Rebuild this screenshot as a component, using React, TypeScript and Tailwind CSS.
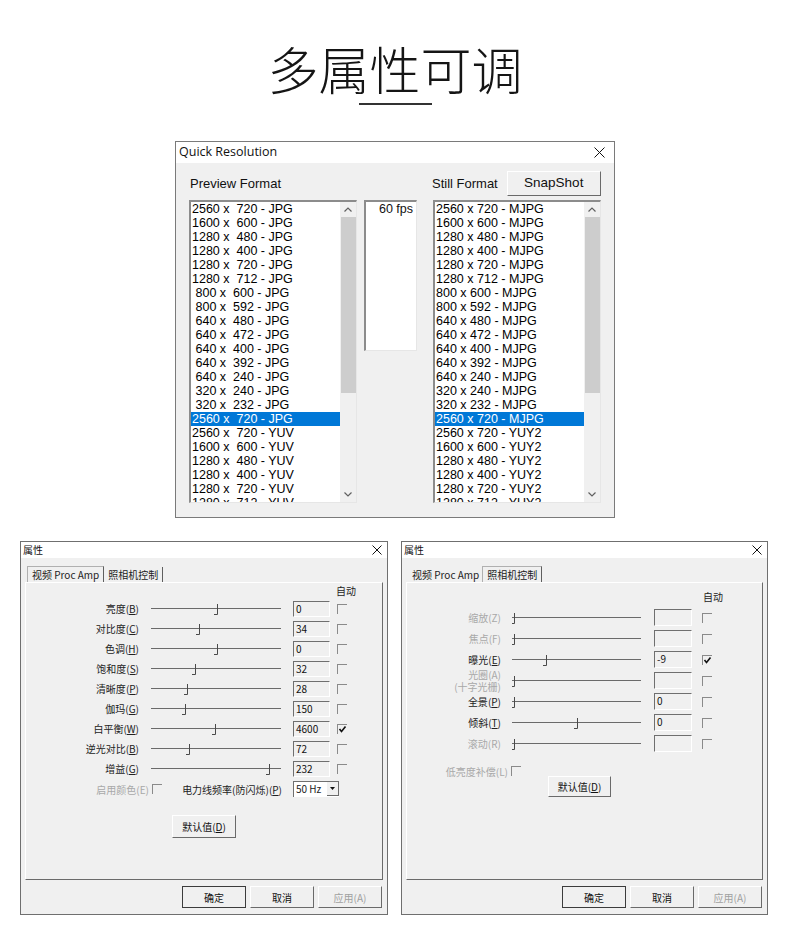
import React from "react";

const CJK = "font-['Noto_Sans_CJK_SC',sans-serif]";
const ARIAL = "font-['Liberation_Sans',Arial,sans-serif]";

const leftItems = [
  "2560 x  720 - JPG",
  "1600 x  600 - JPG",
  "1280 x  480 - JPG",
  "1280 x  400 - JPG",
  "1280 x  720 - JPG",
  "1280 x  712 - JPG",
  " 800 x  600 - JPG",
  " 800 x  592 - JPG",
  " 640 x  480 - JPG",
  " 640 x  472 - JPG",
  " 640 x  400 - JPG",
  " 640 x  392 - JPG",
  " 640 x  240 - JPG",
  " 320 x  240 - JPG",
  " 320 x  232 - JPG",
  "2560 x  720 - JPG",
  "2560 x  720 - YUV",
  "1600 x  600 - YUV",
  "1280 x  480 - YUV",
  "1280 x  400 - YUV",
  "1280 x  720 - YUV",
  "1280 x  712 - YUV",
];

const rightItems = [
  "2560 x 720 - MJPG",
  "1600 x 600 - MJPG",
  "1280 x 480 - MJPG",
  "1280 x 400 - MJPG",
  "1280 x 720 - MJPG",
  "1280 x 712 - MJPG",
  "800 x 600 - MJPG",
  "800 x 592 - MJPG",
  "640 x 480 - MJPG",
  "640 x 472 - MJPG",
  "640 x 400 - MJPG",
  "640 x 392 - MJPG",
  "640 x 240 - MJPG",
  "320 x 240 - MJPG",
  "320 x 232 - MJPG",
  "2560 x 720 - MJPG",
  "2560 x 720 - YUY2",
  "1600 x 600 - YUY2",
  "1280 x 480 - YUY2",
  "1280 x 400 - YUY2",
  "1280 x 720 - YUY2",
  "1280 x 712 - YUY2",
];

function Chevron({ up }: { up?: boolean }) {
  return (
    <svg width="8" height="5" viewBox="0 0 8 5">
      <path
        d={up ? "M0.5 4.5 L4 1 L7.5 4.5" : "M0.5 0.5 L4 4 L7.5 0.5"}
        fill="none"
        stroke="#606060"
        strokeWidth="1.2"
      />
    </svg>
  );
}

function CloseX({ size }: { size: number }) {
  return (
    <svg width={size} height={size} viewBox={`0 0 ${size} ${size}`}>
      <path
        d={`M0.5 0.5 L${size - 0.5} ${size - 0.5} M${size - 0.5} 0.5 L0.5 ${size - 0.5}`}
        stroke="#111"
        strokeWidth="1"
      />
    </svg>
  );
}

function ListBox({ items, selected }: { items: string[]; selected: number }) {
  return (
    <div className="w-[168px] h-[303px] flex border-t-2 border-l-2 border-t-[#8c8c8c] border-l-[#8c8c8c] border-r border-b border-r-[#e6e6e6] border-b-[#e6e6e6] bg-white overflow-hidden">
      <div className="flex-1 overflow-hidden">
        {items.map((t, i) => (
          <div
            key={i}
            className={`h-[14px] leading-[14px] text-[12.5px] pl-[1px] whitespace-pre ${
              i === selected ? "bg-[#0078d7] text-white" : "text-black"
            }`}
          >
            {t}
          </div>
        ))}
      </div>
      <div className="w-[16px] bg-[#f0f0f0] flex flex-col items-center">
        <div className="h-[15px] flex items-center justify-center">
          <Chevron up />
        </div>
        <div className="h-[176px] w-[15px] bg-[#cdcdcd]" />
        <div className="flex-1" />
        <div className="h-[16px] flex items-center justify-center">
          <Chevron />
        </div>
      </div>
    </div>
  );
}

function Slider({ w, pos }: { w: number; pos: number }) {
  return (
    <svg width={w} height={16} className="block shrink-0">
      <line x1={0} y1={7.5} x2={w} y2={7.5} stroke="#6a6a6a" />
      <path d={`M${pos + 0.5} 3 V13.5 H${pos - 3}`} fill="none" stroke="#4a4a4a" />
    </svg>
  );
}

function Check({ on }: { on?: boolean }) {
  return (
    <div className="w-[10px] h-[10px] shrink-0 border-t border-l border-t-[#8a8a8a] border-l-[#8a8a8a]">
      {on && (
        <svg width="9" height="9" viewBox="0 0 9 9" className="block">
          <path d="M1.5 4 L3.5 6.5 L7.5 1.5" fill="none" stroke="#111" strokeWidth="1.6" />
        </svg>
      )}
    </div>
  );
}

function TextBox({ v, w, h }: { v: string; w: string; h: string }) {
  return (
    <div
      className={`${w} ${h} shrink-0 border-t border-l border-t-[#6f6f6f] border-l-[#6f6f6f] border-r border-b border-r-white border-b-white pl-[2px] text-[10px] leading-[14px] text-[#111]`}
    >
      {v}
    </div>
  );
}

function Btn({
  children,
  className,
  def,
  disabled,
}: {
  children: React.ReactNode;
  className: string;
  def?: boolean;
  disabled?: boolean;
}) {
  return (
    <div
      className={`${className} flex items-center justify-center text-[10px] bg-[#f0f0f0] border ${
        def
          ? "border-[#3c3c3c]"
          : "border-t-white border-l-white border-r-[#6a6a6a] border-b-[#6a6a6a]"
      } ${disabled ? "text-[#a0a0a0]" : "text-[#111]"}`}
    >
      {children}
    </div>
  );
}

function Label({ text, u, off }: { text: string; u: string; off?: boolean }) {
  if (off) {
    return (
      <span className="text-[#a8a8a8]">
        {text}({u})
      </span>
    );
  }
  return (
    <span>
      {text}(<u>{u}</u>)
    </span>
  );
}

const ampRows = [
  { t: "亮度", u: "B", v: "0", p: 66 },
  { t: "对比度", u: "C", v: "34", p: 48 },
  { t: "色调", u: "H", v: "0", p: 66 },
  { t: "饱和度", u: "S", v: "32", p: 44 },
  { t: "清晰度", u: "P", v: "28", p: 36 },
  { t: "伽玛", u: "G", v: "150", p: 34 },
  { t: "白平衡", u: "W", v: "4600", p: 64, on: true },
  { t: "逆光对比", u: "B", v: "72", p: 38 },
  { t: "增益", u: "G", v: "232", p: 118 },
];

const camRows = [
  { t: "缩放", u: "Z", v: "", p: 2, off: true },
  { t: "焦点", u: "F", v: "", p: 2, off: true },
  { t: "曝光", u: "E", v: "-9", p: 34, on: true },
  { t: "光圈", u: "A", v: "", p: 2, off: true, two: true },
  { t: "全景", u: "P", v: "0", p: 2 },
  { t: "倾斜", u: "T", v: "0", p: 65 },
  { t: "滚动", u: "R", v: "", p: 2, off: true },
];

function TitleBar() {
  return (
    <div className="h-[16px] bg-white flex items-center justify-between pl-[2px] pr-[5px]">
      <span className="text-[10px] leading-[16px] text-[#111]">属性</span>
      <CloseX size={10} />
    </div>
  );
}

function BottomButtons() {
  return (
    <div className="mt-[6px] flex justify-end gap-[4px] pr-[5px]">
      <Btn className="w-[64px] h-[22px]" def>
        确定
      </Btn>
      <Btn className="w-[64px] h-[22px]">取消</Btn>
      <Btn className="w-[64px] h-[22px]" disabled>
        应用(A)
      </Btn>
    </div>
  );
}

const selTab =
  "h-[16px] px-[4px] flex items-center whitespace-nowrap text-[10px] text-[#222] border-t border-l border-r border-t-[#b0b0b0] border-l-[#b0b0b0] border-r-[#5f5f5f]";
const plainTab =
  "h-[15px] px-[4px] flex items-center whitespace-nowrap text-[10px] text-[#222] border-r border-r-[#5f5f5f]";
const panel =
  "border border-t-white border-l-white border-r-[#6a6a6a] border-b-[#6a6a6a] h-[298px] ml-[4px]";

function AmpDialog() {
  return (
    <div className={`w-[368px] h-[374px] border border-[#6f6f6f] bg-[#f0f0f0] flex flex-col ${CJK}`}>
      <TitleBar />
      <div className="mt-[8px] ml-[6px] flex items-end h-[16px]">
        <div className={selTab}>视频 Proc Amp</div>
        <div className={plainTab}>照相机控制</div>
      </div>
      <div className={`${panel} w-[358px]`}>
        <div className="mt-[1px] h-[14px] pl-[310px] text-[10px] leading-[14px] text-[#222]">自动</div>
        <div className="mt-[3px] flex flex-col gap-[4px]">
          {ampRows.map((r, i) => (
            <div key={i} className="flex items-center h-[16px]">
              <div className="w-[113px] text-right text-[10px] leading-[16px] text-[#222]">
                <Label text={r.t} u={r.u} />
              </div>
              <div className="ml-[12px]">
                <Slider w={130} pos={r.p} />
              </div>
              <div className="ml-[12px]">
                <TextBox v={r.v} w="w-[37px]" h="h-[16px]" />
              </div>
              <div className="ml-[7px]">
                <Check on={r.on} />
              </div>
            </div>
          ))}
        </div>
        <div className="mt-[4px] flex items-center h-[16px] text-[10px] text-[#222]">
          <div className="w-[123px] text-right whitespace-nowrap">
            <Label text="启用颜色" u="E" off />
          </div>
          <div className="ml-[3px]">
            <Check />
          </div>
          <div className="w-[120px] text-right whitespace-nowrap">
            电力线频率(防闪烁)(<u>P</u>)
          </div>
          <div className="ml-[11px] w-[46px] h-[16px] flex border-t border-l border-t-[#6f6f6f] border-l-[#6f6f6f] bg-white">
            <div className="flex-1 pl-[2px] leading-[14px] whitespace-nowrap">50 Hz</div>
            <div className="w-[12px] h-[14px] bg-[#f0f0f0] border-r border-b border-r-[#6a6a6a] border-b-[#6a6a6a] flex items-center justify-center">
              <svg width="5" height="3" viewBox="0 0 5 3">
                <path d="M0 0 H5 L2.5 3 Z" fill="#111" />
              </svg>
            </div>
          </div>
        </div>
        <Btn className="mt-[18px] mx-auto w-[64px] h-[23px]">
          默认值(<u>D</u>)
        </Btn>
      </div>
      <BottomButtons />
    </div>
  );
}

function CamDialog() {
  return (
    <div className={`w-[367px] h-[374px] border border-[#6f6f6f] bg-[#f0f0f0] flex flex-col ${CJK}`}>
      <TitleBar />
      <div className="mt-[8px] ml-[6px] flex items-end h-[16px]">
        <div className="h-[15px] pl-[4px] pr-[3px] flex items-center whitespace-nowrap text-[10px] text-[#222]">
          视频 Proc Amp
        </div>
        <div className={selTab}>照相机控制</div>
      </div>
      <div className={`${panel} w-[357px]`}>
        <div className="mt-[7px] h-[14px] pl-[296px] text-[10px] leading-[14px] text-[#222]">自动</div>
        <div className="mt-[5px] flex flex-col gap-[4px]">
          {camRows.map((r, i) => (
            <div key={i} className="flex items-center h-[17px]">
              <div className="w-[94px] text-right text-[10px] leading-[12px] text-[#222] whitespace-nowrap">
                <Label text={r.t} u={r.u} off={r.off} />
                {r.two && <div className="text-[#a8a8a8]">(十字光栅)</div>}
              </div>
              <div className="ml-[11px]">
                <Slider w={129} pos={r.p} />
              </div>
              <div className="ml-[13px]">
                <TextBox v={r.v} w="w-[38px]" h="h-[17px]" />
              </div>
              <div className="ml-[10px]">
                <Check on={r.on} />
              </div>
            </div>
          ))}
        </div>
        <div className="mt-[14px] flex items-center h-[10px] text-[10px]">
          <div className="w-[101px] text-right whitespace-nowrap">
            <Label text="低亮度补偿" u="L" off />
          </div>
          <div className="ml-[3px]">
            <Check />
          </div>
        </div>
        <Btn className="ml-[141px] w-[63px] h-[21px]">
          默认值(<u>D</u>)
        </Btn>
      </div>
      <BottomButtons />
    </div>
  );
}

export default function App() {
  return (
    <div className="w-[790px] h-[941px] bg-white overflow-hidden">
      <h1
        className={`mt-[42px] h-[52px] text-center text-[51px] leading-[52px] font-light text-[#151515] ${CJK}`}
      >
        多属性可调
      </h1>
      <div className="mt-[9px] mx-auto w-[73px] h-[2px] bg-[#333]" />

      <div className="mt-[36px] mx-auto w-[440px] h-[377px] border border-[#7a7a7a] flex flex-col bg-[#f0f0f0]">
        <div className="h-[21px] bg-white flex items-center justify-between pl-[3px] pr-[9px]">
          <span className="text-[12.5px] font-['Open_Sans',sans-serif] text-[#111]">Quick Resolution</span>
          <CloseX size={11} />
        </div>
        <div className={`flex-1 pl-[13px] pt-[8px] text-[13px] text-[#111] ${ARIAL}`}>
          <div className="flex items-center h-[25px]">
            <div className="w-[243px] pl-[1px]">Preview Format</div>
            <div>Still Format</div>
            <div className="ml-[9px] w-[94px] h-[25px] flex items-center justify-center bg-[#f0f0f0] border border-t-white border-l-white border-r-[#6a6a6a] border-b-[#6a6a6a] text-[13.5px]">
              SnapShot
            </div>
          </div>
          <div className="mt-[4px] flex items-start">
            <ListBox items={leftItems} selected={15} />
            <div className="ml-[7px] w-[53px] h-[151px] bg-white border-t-2 border-l-2 border-t-[#8c8c8c] border-l-[#8c8c8c] border-r border-b border-r-[#e6e6e6] border-b-[#e6e6e6] text-right pr-[3px] text-[12.5px] leading-[14px]">
              60 fps
            </div>
            <div className="ml-[16px]">
              <ListBox items={rightItems} selected={15} />
            </div>
          </div>
        </div>
      </div>

      <div className="mt-[23px] flex pl-[20px] gap-[13px]">
        <AmpDialog />
        <CamDialog />
      </div>
    </div>
  );
}
